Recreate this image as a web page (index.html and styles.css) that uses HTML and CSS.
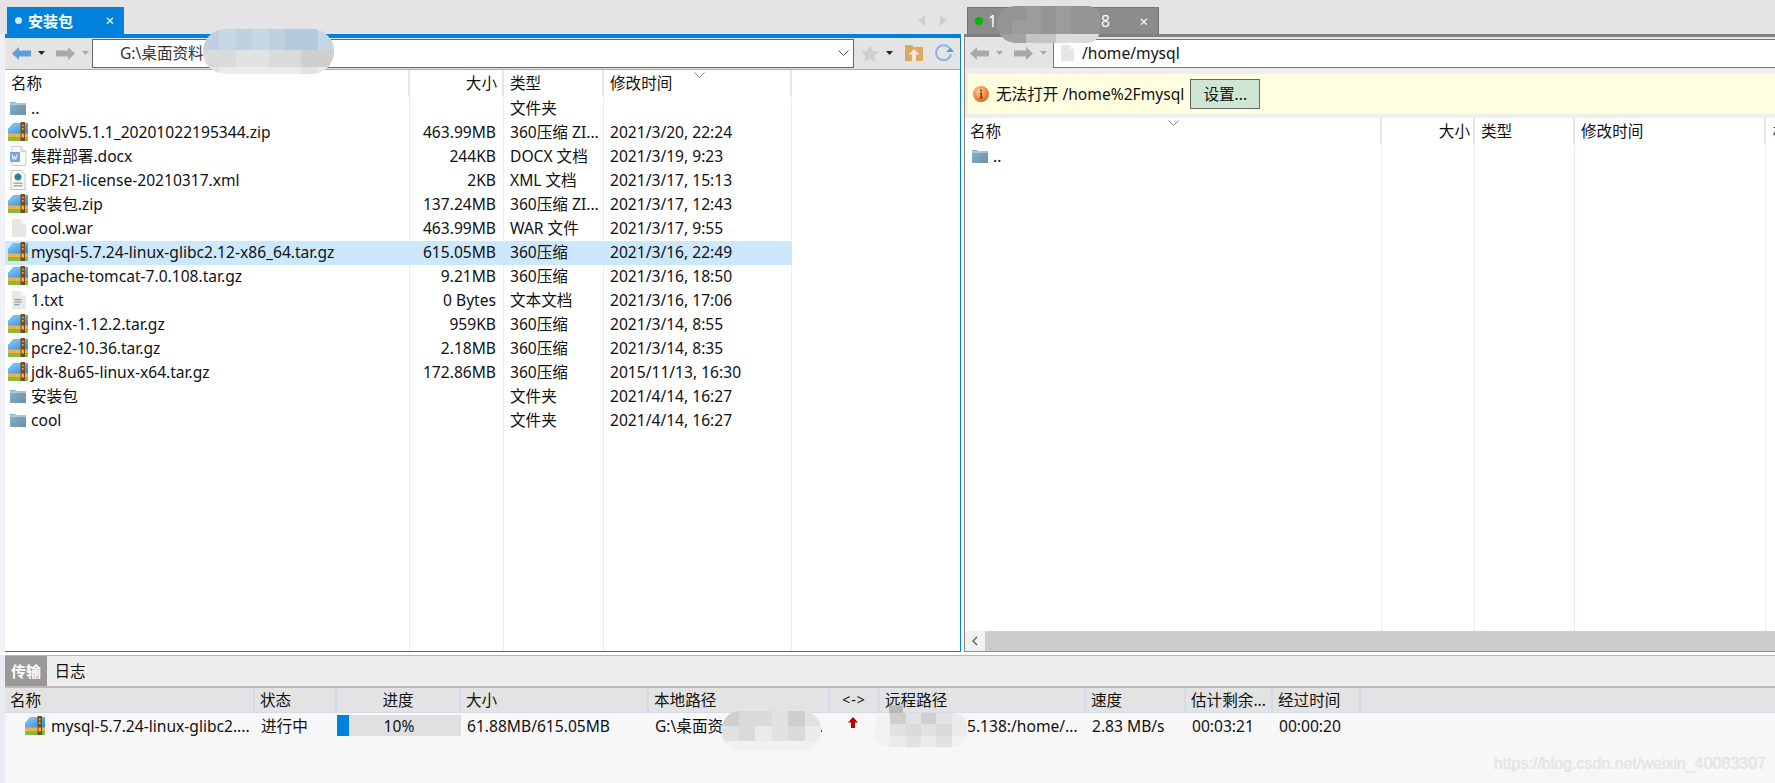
FILE: index.html
```html
<!DOCTYPE html>
<html lang="zh-CN">
<head>
<meta charset="utf-8">
<title>FileZilla</title>
<link rel="stylesheet" href="styles.css">
</head>
<body>
<svg class="defs" width="0" height="0" aria-hidden="true">
  <defs>
    <linearGradient id="fg" x1="0" y1="0" x2="1" y2="1"><stop offset="0" stop-color="#86b4c8"/><stop offset="1" stop-color="#6d8fa8"/></linearGradient>
    <linearGradient id="ab" x1="0" y1="0" x2="1" y2="1"><stop offset="0" stop-color="#8ad2f8"/><stop offset="1" stop-color="#2f86d8"/></linearGradient>
    <radialGradient id="ig" cx=".4" cy=".35" r=".7"><stop offset="0" stop-color="#fbd6a8"/><stop offset=".55" stop-color="#f0924a"/><stop offset="1" stop-color="#d8641c"/></radialGradient>
    <symbol id="i-folder" viewBox="0 0 18 16"><path d="M1 2h5l1 1h10v12H1z" fill="url(#fg)"/><path d="M1 3.500h16v1H1z" fill="#d6e4ec"/></symbol>
    <symbol id="i-archive" viewBox="0 0 20 20"><path d="M0 7 5 1h15v11H0z" fill="url(#ab)"/><path d="M0 11.500h20v3.500H0z" fill="#f4b044"/><path d="M0 15h20v3a1 1 0 0 1-1 1H1a1 1 0 0 1-1-1z" fill="#84bc3e"/><path d="M12.500 0h4.500v19h-4.500z" fill="#7a4a1e"/><path d="M14 2.500h1.500v2H14zm0 3.500h1.500v2H14zm-.5 5.500h2.500v4h-2.500z" fill="#e8b060"/></symbol>
    <symbol id="i-doc" viewBox="0 0 18 20"><path d="M3 .5h9l5 5v14H3z" fill="#fbfbfd" stroke="#c9cdd6"/><path d="M12 .5v5h5" fill="#e6e8ee" stroke="#c9cdd6"/><path d="M1 6h10v10H1z" fill="#7aa6e6"/><path d="m3 8.500 1.300 5 1.200-3.500 1.200 3.500 1.300-5" fill="none" stroke="#fff" stroke-width=".9"/></symbol>
    <symbol id="i-xml" viewBox="0 0 18 20"><path d="M2 .5h10l4 4v15H2z" fill="#f8f8f8" stroke="#c4c4c4"/><circle cx="9" cy="7" r="3.500" fill="#3a9a58"/><path d="M6 6.500h6M9 3.500v6" stroke="#2a62c8" stroke-width="1.300"/><path d="M4.500 12.500h9v1.500h-9zm0 2.500h9v1.500h-9z" fill="#a8a8a8"/></symbol>
    <symbol id="i-blank" viewBox="0 0 14 18"><path d="M0 0h9l5 5v13H0z" fill="#e6e6e6"/><path d="M9 0v5h5z" fill="#f4f4f4"/></symbol>
    <symbol id="i-txt" viewBox="0 0 14 18"><path d="M0 0h9l5 5v13H0z" fill="#e8e8e8"/><path d="M9 0v5h5z" fill="#f6f6f6"/><path d="M2.500 8h7v1.200h-7zm0 2.500h7v1.200h-7zm0 2.500h5v1.200h-5z" fill="#9c9c9c"/></symbol>
    <symbol id="i-back" viewBox="0 0 19 13"><path d="M0 6.500 7 0v3.500h12v6H7V13z"/></symbol>
    <symbol id="i-fwd" viewBox="0 0 19 13"><path d="M19 6.500 12 0v3.500H0v6h12V13z"/></symbol>
    <symbol id="i-caret" viewBox="0 0 7 4"><path d="M0 0h7L3.500 4z"/></symbol>
  </defs>
</svg>

<div class="app">
  <div class="main">
    <section class="pane pane-left">
      <div class="tabbar">
        <div class="tab tab-active"><span class="dot dot-light"></span><span class="tab-title">安装包</span><span class="tab-close">×</span></div>
        <div class="tab-nav">
          <svg class="tab-arrow" viewBox="0 0 7 11"><path d="M7 0v11L0 5.500z"/></svg>
          <svg class="tab-arrow" viewBox="0 0 7 11"><path d="M0 0v11l7-5.500z"/></svg>
        </div>
      </div>
      <div class="pane-body body-left">
        <div class="toolbar">
          <svg class="nav nav-blue"><use href="#i-back"/></svg>
          <svg class="caret caret-dark"><use href="#i-caret"/></svg>
          <svg class="nav nav-gray nav-second"><use href="#i-fwd"/></svg>
          <svg class="caret caret-gray"><use href="#i-caret"/></svg>
          <div class="address address-left">
            <span class="addr-text">G:\桌面资料</span>
            <svg class="chevron" viewBox="0 0 11 6"><path d="m.5.500 5 5 5-5" fill="none" stroke="#555"/></svg>
          </div>
          <svg class="tool-star" viewBox="0 0 18 17"><path d="m9 0 2.700 6 6.300.7-4.700 4.300 1.300 6L9 14l-5.600 3 1.300-6L0 6.700 6.300 6z" fill="#cfcfcf"/></svg>
          <svg class="caret caret-black"><use href="#i-caret"/></svg>
          <svg class="tool-home" viewBox="0 0 18 16"><path d="M0 0h7l2 2h9v14H0z" fill="#dfa766"/><path d="M9 4 3.500 9.500H7V16h4V9.500h3.500z" fill="#f7ead8"/></svg>
          <svg class="tool-refresh" viewBox="0 0 20 18"><path d="M15.500 4A7.500 7.500 0 1 0 17 10" fill="none" stroke="#86b8e4" stroke-width="2"/><path d="m12 8 4.500-4.500L20 8z" fill="#5a9fdc"/></svg>
        </div>
        <div class="cols cols-left head">
          <div class="hcell">名称</div>
          <div class="hcell right">大小</div>
          <div class="hcell">类型</div>
          <div class="hcell hcell-sorted">修改时间<svg class="sort sort-left" viewBox="0 0 11 6"><path d="m.5.500 5 5 5-5" fill="none" stroke="#888"/></svg></div>
        </div>
        <div class="list list-left">
          <div class="cols cols-left row"><div class="cell name"><svg class="ic ic-folder"><use href="#i-folder"/></svg>..</div><div class="cell right"></div><div class="cell">文件夹</div><div class="cell"></div></div>
          <div class="cols cols-left row"><div class="cell name"><svg class="ic ic-archive"><use href="#i-archive"/></svg>coolvV5.1.1_20201022195344.zip</div><div class="cell right">463.99MB</div><div class="cell">360压缩 ZI...</div><div class="cell">2021/3/20, 22:24</div></div>
          <div class="cols cols-left row"><div class="cell name"><svg class="ic ic-doc"><use href="#i-doc"/></svg>集群部署.docx</div><div class="cell right">244KB</div><div class="cell">DOCX 文档</div><div class="cell">2021/3/19, 9:23</div></div>
          <div class="cols cols-left row"><div class="cell name"><svg class="ic ic-doc"><use href="#i-xml"/></svg>EDF21-license-20210317.xml</div><div class="cell right">2KB</div><div class="cell">XML 文档</div><div class="cell">2021/3/17, 15:13</div></div>
          <div class="cols cols-left row"><div class="cell name"><svg class="ic ic-archive"><use href="#i-archive"/></svg>安装包.zip</div><div class="cell right">137.24MB</div><div class="cell">360压缩 ZI...</div><div class="cell">2021/3/17, 12:43</div></div>
          <div class="cols cols-left row"><div class="cell name"><svg class="ic ic-file"><use href="#i-blank"/></svg>cool.war</div><div class="cell right">463.99MB</div><div class="cell">WAR 文件</div><div class="cell">2021/3/17, 9:55</div></div>
          <div class="cols cols-left row selected"><div class="cell name"><svg class="ic ic-archive"><use href="#i-archive"/></svg>mysql-5.7.24-linux-glibc2.12-x86_64.tar.gz</div><div class="cell right">615.05MB</div><div class="cell">360压缩</div><div class="cell">2021/3/16, 22:49</div></div>
          <div class="cols cols-left row"><div class="cell name"><svg class="ic ic-archive"><use href="#i-archive"/></svg>apache-tomcat-7.0.108.tar.gz</div><div class="cell right">9.21MB</div><div class="cell">360压缩</div><div class="cell">2021/3/16, 18:50</div></div>
          <div class="cols cols-left row"><div class="cell name"><svg class="ic ic-file"><use href="#i-txt"/></svg>1.txt</div><div class="cell right">0 Bytes</div><div class="cell">文本文档</div><div class="cell">2021/3/16, 17:06</div></div>
          <div class="cols cols-left row"><div class="cell name"><svg class="ic ic-archive"><use href="#i-archive"/></svg>nginx-1.12.2.tar.gz</div><div class="cell right">959KB</div><div class="cell">360压缩</div><div class="cell">2021/3/14, 8:55</div></div>
          <div class="cols cols-left row"><div class="cell name"><svg class="ic ic-archive"><use href="#i-archive"/></svg>pcre2-10.36.tar.gz</div><div class="cell right">2.18MB</div><div class="cell">360压缩</div><div class="cell">2021/3/14, 8:35</div></div>
          <div class="cols cols-left row"><div class="cell name"><svg class="ic ic-archive"><use href="#i-archive"/></svg>jdk-8u65-linux-x64.tar.gz</div><div class="cell right">172.86MB</div><div class="cell">360压缩</div><div class="cell">2015/11/13, 16:30</div></div>
          <div class="cols cols-left row"><div class="cell name"><svg class="ic ic-folder"><use href="#i-folder"/></svg>安装包</div><div class="cell right"></div><div class="cell">文件夹</div><div class="cell">2021/4/14, 16:27</div></div>
          <div class="cols cols-left row"><div class="cell name"><svg class="ic ic-folder"><use href="#i-folder"/></svg>cool</div><div class="cell right"></div><div class="cell">文件夹</div><div class="cell">2021/4/14, 16:27</div></div>
        </div>
      </div>
    </section>

    <section class="pane pane-right">
      <div class="tabbar tabbar-right">
        <div class="tab tab-idle"><span class="dot dot-green"></span><span class="tab-title tab-host"><span>1</span><span>8</span></span><span class="tab-close">×</span></div>
      </div>
      <div class="pane-body body-right">
        <div class="toolbar toolbar-right">
          <svg class="nav nav-gray nav-r1"><use href="#i-back"/></svg>
          <svg class="caret caret-gray"><use href="#i-caret"/></svg>
          <svg class="nav nav-gray nav-second"><use href="#i-fwd"/></svg>
          <svg class="caret caret-gray"><use href="#i-caret"/></svg>
          <div class="address address-right">
            <svg class="addr-doc"><use href="#i-blank"/></svg>
            <span class="addr-path">/home/mysql</span>
          </div>
        </div>
        <div class="notice-wrap">
          <div class="notice">
            <svg class="info" viewBox="0 0 16 16"><circle cx="8" cy="8" r="8" fill="url(#ig)"/><circle cx="8" cy="4.500" r="1.100" fill="#7a3208"/><path d="M6.500 6.500h2.500v5h1v1H6.500v-1h1v-4h-1z" fill="#7a3208"/></svg>
            <span class="notice-text">无法打开 /home%2Fmysql</span>
            <button class="notice-btn">设置...</button>
          </div>
        </div>
        <div class="cols cols-right head">
          <div class="hcell hcell-sorted">名称<svg class="sort sort-right" viewBox="0 0 11 6"><path d="m.5.500 5 5 5-5" fill="none" stroke="#888"/></svg></div>
          <div class="hcell right">大小</div>
          <div class="hcell">类型</div>
          <div class="hcell">修改时间</div>
          <div class="hcell hcell-last">权限</div>
        </div>
        <div class="list list-right">
          <div class="cols cols-right row"><div class="cell name name-r"><svg class="ic ic-folder"><use href="#i-folder"/></svg>..</div></div>
        </div>
        <div class="hscroll">
          <div class="hscroll-btn"><svg viewBox="0 0 6 10" class="hscroll-arrow"><path d="M5 1 1 5l4 4" fill="none" stroke="#555" stroke-width="1.200"/></svg></div>
          <div class="hscroll-thumb"></div>
        </div>
      </div>
    </section>
  </div>

  <section class="queue">
    <div class="queue-tabs">
      <div class="qtab qtab-active">传输</div>
      <div class="qtab">日志</div>
    </div>
    <div class="qcols qhead">
      <div class="qh">名称</div>
      <div class="qh">状态</div>
      <div class="qh center">进度</div>
      <div class="qh">大小</div>
      <div class="qh">本地路径</div>
      <div class="qh center qh-arrow">&lt;-&gt;</div>
      <div class="qh">远程路径</div>
      <div class="qh">速度</div>
      <div class="qh">估计剩余...</div>
      <div class="qh">经过时间</div>
    </div>
    <div class="qcols qrow">
      <div class="qc qname"><svg class="qic"><use href="#i-archive"/></svg>mysql-5.7.24-linux-glibc2....</div>
      <div class="qc">进行中</div>
      <div class="qc qprogress"><div class="bar"><div class="bar-fill" style="width:10%"></div><span class="bar-label">10%</span></div></div>
      <div class="qc">61.88MB/615.05MB</div>
      <div class="qc qlocal"><span>G:\桌面资</span><span>.</span></div>
      <div class="qc center"><svg class="up" viewBox="0 0 10 11"><path d="M5 0 10 5.500H7V11H3V5.500H0z"/></svg></div>
      <div class="qc qremote">5.138:/home/...</div>
      <div class="qc">2.83 MB/s</div>
      <div class="qc">00:03:21</div>
      <div class="qc">00:00:20</div>
    </div>
    <div class="watermark">https://blog.csdn.net/weixin_40083307</div>
  </section>

  <div class="blob blob-addr">
    <i class="m1"></i><i class="m2"></i><i class="m1"></i><i class="m2"></i><i class="m1"></i><i class="m3"></i><i class="m3"></i><i class="m2"></i>
    <i class="m4"></i><i class="m4"></i><i class="m5"></i><i class="m5"></i><i class="m4"></i><i class="m4"></i><i class="m6"></i><i class="m6"></i>
    <i class="m5"></i><i class="m7"></i><i class="m7"></i><i class="m7"></i><i class="m7"></i><i class="m7"></i><i class="m5"></i><i class="m7"></i>
  </div>
  <div class="blob blob-tab">
    <i class="g1"></i><i class="g1"></i><i class="g2"></i><i class="g1"></i><i class="g2"></i><i class="g1"></i><i class="g1"></i>
    <i class="g1"></i><i class="g2"></i><i class="g2"></i><i class="g1"></i><i class="g2"></i><i class="g1"></i><i class="g1"></i>
    <i class="g3"></i><i class="g3"></i><i class="g4"></i><i class="g4"></i><i class="g5"></i><i class="g5"></i><i class="g5"></i>
  </div>
  <div class="blob blob-local">
    <i class="m6"></i><i class="m4"></i><i class="m4"></i><i class="m5"></i><i class="m6"></i><i class="m5"></i>
    <i class="m5"></i><i class="m4"></i><i class="m7"></i><i class="m5"></i><i class="m4"></i><i class="m7"></i>
    <i class="m8"></i><i class="m8"></i><i class="m8"></i><i class="m8"></i><i class="m8"></i><i class="m8"></i>
  </div>
  <div class="blob-notch"></div>
  <div class="blob blob-remote">
    <i class="m8"></i><i class="m6"></i><i class="m5"></i><i class="m6"></i><i class="m5"></i><i class="m7"></i>
    <i class="m8"></i><i class="m5"></i><i class="m4"></i><i class="m5"></i><i class="m4"></i><i class="m7"></i>
    <i class="m8"></i><i class="m7"></i><i class="m5"></i><i class="m7"></i><i class="m5"></i><i class="m8"></i>
  </div>
</div>
</body>
</html>
```
FILE: styles.css
```css
* { box-sizing: border-box; }
html, body { margin: 0; padding: 0; }
body {
  width: 1775px;
  height: 783px;
  overflow: hidden;
  font-family: "Noto Sans", "Noto Sans CJK SC", sans-serif;
  font-size: 15.6px;
  color: #111;
  background: #e9ebf1;
}
.defs { position: absolute; }
.app { position: relative; width: 1775px; height: 783px; overflow: hidden; }

/* top split */
.main {
  display: flex;
  gap: 3px;
  height: 655px;
  background: linear-gradient(#e4e4e4 34px, #fff 34px);
}
.pane { height: 652px; display: flex; flex-direction: column; }
.pane-left { width: 961px; background: #eff1f6; }
.pane-right { flex: 1; min-width: 0; }

.tabbar { height: 34px; flex: none; background: #e4e4e4; display: flex; align-items: flex-end; padding-left: 7px; }
.tabbar-right { padding-left: 3px; }
.tab { height: 27px; display: flex; align-items: center; color: #fff; }
.tab-active { width: 117px; background: #0082dc; padding-left: 8px; }
.tab-idle { width: 192px; background: #8c8c8c; border: 1px solid #777; border-bottom: 0; padding-left: 7px; }
.dot { width: 8px; height: 8px; border-radius: 50%; flex: none; }
.dot-light { background: #cfe4f5; width: 7px; height: 7px; }
.dot-green { background: #00b800; }
.tab-title { margin-left: 6px; font-weight: 700; font-size: 15px; padding-bottom: 1px; }
.tab-host { display: flex; justify-content: space-between; width: 122px; margin-left: 5px; font-weight: 400; font-size: 15.6px; }
.tab-close { margin-left: auto; margin-right: 10px; font-size: 15px; line-height: 1; }
.tab-nav { margin-left: auto; margin-right: 14px; display: flex; gap: 15px; align-self: center; margin-top: 7px; }
.tab-arrow { width: 7px; height: 11px; fill: #cfcfcf; }

.pane-body { flex: 1; min-height: 0; display: flex; flex-direction: column; background: #fff; }
.body-left { margin-left: 5px; border-top: 4px solid #0082dc; border-right: 1px solid #0082dc; border-bottom: 1px solid #0a82d8; }
.body-right { border-top: 3px solid #808080; border-left: 1px solid #808080; border-bottom: 1px solid #909090; }

.toolbar { height: 32px; flex: none; background: #e4e4e4; border-bottom: 1px solid #aaa; display: flex; align-items: center; padding: 0 0 1px 7px; }
.toolbar-right { height: 31px; padding: 1px 0 0 5px; background: #e4e4e4; border-bottom: 0; }
.nav { width: 19px; height: 13px; flex: none; }
.nav-blue { fill: #5f9fd8; }
.nav-gray { fill: #a9a9a9; }
.nav-second { margin-left: 11px; }
.caret { width: 7px; height: 4px; flex: none; margin-left: 7px; }
.caret-dark, .caret-black { fill: #222; }
.caret-gray { fill: #a9a9a9; }

.address { height: 29px; background: #fff; border: 1px solid #666; display: flex; align-items: center; padding-bottom: 1px; }
.address-left { width: 762px; margin-left: 3px; padding-left: 27px; }
.address-right { flex: 1; margin-left: 6px; padding-left: 7px; border-right: 0; border-color: #777; }
.addr-text { color: #333; }
.chevron { width: 11px; height: 6px; margin-left: auto; margin-right: 4px; }
.addr-doc { width: 13px; height: 18px; flex: none; }
.addr-path { margin-left: 8px; }
.tool-star { width: 18px; height: 17px; margin-left: 7px; flex: none; }
.tool-home { width: 18px; height: 16px; margin-left: 12px; flex: none; }
.tool-refresh { width: 20px; height: 18px; margin-left: 11px; flex: none; }
.caret-black { margin-left: 7px; }

.cols { display: grid; }
.cols-left { grid-template-columns: 405px 94px 100px 188px; width: 787px; }
.cols-right { grid-template-columns: 417px 93px 100px 191px 1fr; }

.head { height: 27px; flex: none; }
.hcell { position: relative; border-right: 2px solid #e6e6e6; padding: 0 5px 2px 6px; display: flex; align-items: center; height: 26px; }
.hcell.right { justify-content: flex-end; }
.cols-right .hcell.right { padding-right: 3px; }
.hcell-last { border-right: 0; padding-left: 7px; white-space: nowrap; overflow: hidden; }
.cols-right .hcell:first-child { padding-left: 5px; }
.sort { position: absolute; top: 2px; width: 11px; height: 6px; }
.sort-left { left: 90px; }
.sort-right { left: 203px; }

.list { flex: 1; min-height: 0; overflow: hidden; background-repeat: no-repeat; }
.list-left {
  background-image: linear-gradient(#e6eff8, #e6eff8), linear-gradient(#e6eff8, #e6eff8), linear-gradient(#e6eff8, #e6eff8), linear-gradient(#e6eff8, #e6eff8);
  background-size: 1px 100%;
  background-position: 404px 0, 498px 0, 598px 0, 786px 0;
}
.list-right {
  background-image: linear-gradient(#e6eff8, #e6eff8), linear-gradient(#e6eff8, #e6eff8), linear-gradient(#e6eff8, #e6eff8), linear-gradient(#e6eff8, #e6eff8);
  background-size: 1px 100%;
  background-position: 416px 0, 509px 0, 609px 0, 800px 0;
}
.row { height: 24px; padding-bottom: 2px; align-items: center; }
.row.selected { background: #cce8ff; }
.cell { padding: 0 6px; white-space: nowrap; overflow: hidden; line-height: 22px; height: 22px; }
.cell.right { text-align: right; padding-right: 8px; }
.name { display: flex; align-items: center; padding-left: 3px; overflow: visible; }
.name-r { padding-left: 5px; }
.ic { flex: none; margin-right: 3px; }
.ic-folder { width: 18px; height: 16px; margin-left: 1px; margin-right: 4px; }
.ic-archive { width: 20px; height: 20px; margin-right: 3px; }
.ic-doc { width: 18px; height: 20px; margin-left: 1px; margin-right: 4px; }
.ic-file { width: 14px; height: 18px; margin-left: 4px; margin-right: 5px; }

/* notice */
.notice-wrap { height: 50px; flex: none; background: #eee; padding: 6px 0 4px 3px; }
.notice { height: 40px; background: #ffffe0; display: flex; align-items: center; padding-left: 5px; }
.info { width: 16px; height: 16px; flex: none; }
.notice-text { margin-left: 7px; padding-bottom: 1px; }
.notice-btn { margin-left: 6px; width: 70px; height: 30px; background: #d0e6d4; border: 1px solid #666; padding: 0 0 2px; font: inherit; color: #111; }

.hscroll { height: 20px; flex: none; display: flex; background: #f0f0f0; }
.hscroll-btn { width: 20px; display: flex; align-items: center; justify-content: center; }
.hscroll-arrow { width: 6px; height: 10px; }
.hscroll-thumb { flex: 1; background: #ccc; }

/* queue */
.queue { position: relative; height: 128px; margin-left: 5px; background: #f7f7f7; border-top: 1px solid #b5b5b5; }
.queue-tabs { height: 30px; background: #eee; display: flex; }
.qtab { width: 42px; display: flex; align-items: center; justify-content: center; margin-right: 2px; padding-bottom: 2px; }
.qtab-active { background: #999; color: #fff; font-weight: 700; font-size: 15px; }
.qcols { display: grid; grid-template-columns: 250px 82px 124px 188px 181px 50px 206px 100px 87px 88px; }
.qhead { height: 27px; background: #e3e3e3; border-top: 2px solid #bbb; border-bottom: 1px solid #d3dbea; }
.qh { border-right: 2px solid #d3dbea; padding: 0 0 2px 5px; display: flex; align-items: center; white-space: nowrap; overflow: hidden; }
.center { justify-content: center; padding-left: 0; }
.qh-arrow { font-size: 14px; letter-spacing: 1px; }
.qrow { height: 26px; }
.qc { display: flex; align-items: center; padding: 0 0 1px 6px; white-space: nowrap; overflow: hidden; }
.qname { padding-left: 20px; }
.qic { width: 20px; height: 20px; margin-right: 6px; flex: none; }
.qprogress { padding: 2px 0 3px; }
.bar { position: relative; width: 100%; height: 21px; background: #e0e0e0; display: flex; }
.bar-fill { background: #0082dc; height: 100%; }
.bar-label { position: absolute; inset: 0; display: flex; align-items: center; justify-content: center; }
.qlocal { justify-content: space-between; padding-right: 7px; }
.up { width: 10px; height: 11px; fill: #c00000; margin-right: 10px; margin-bottom: 6px; }
.qremote { padding-left: 87px; }
.watermark { position: absolute; right: 9px; bottom: 10px; font-family: "Liberation Sans", sans-serif; font-size: 16px; color: #e6e6e6; text-shadow: 0 0 1px #dcdcdc; }

/* redaction mosaics lying over text */
.blob { position: absolute; display: grid; overflow: hidden; }
.blob i { display: block; }
.blob-addr { left: 203px; top: 29px; width: 131px; height: 45px; border-radius: 22px; grid-template-columns: repeat(8, 1fr); grid-template-rows: 21px 17px 7px; }
.blob-tab { left: 997px; top: 6px; width: 103px; height: 37px; border-radius: 28px 18px 20px 28px; grid-template-columns: repeat(7, 1fr); grid-template-rows: 14px 14px 9px; }
.blob-local { left: 722px; top: 711px; width: 99px; height: 39px; border-radius: 18px; grid-template-columns: repeat(6, 1fr); grid-template-rows: 15px 15px 9px; }
.blob-remote { left: 875px; top: 713px; width: 92px; height: 34px; border-radius: 14px; grid-template-columns: repeat(6, 1fr); grid-template-rows: 11px 12px 11px; }
.blob-notch { position: absolute; left: 889px; top: 705px; width: 14px; height: 8px; background: #b8b8b8; border-radius: 3px 3px 0 0; }
.m1 { background: #bfd1e0; }
.m2 { background: #c6d6e4; }
.m3 { background: #b5c9dc; }
.m4 { background: #dadada; }
.m5 { background: #e2e2e2; }
.m6 { background: #cfcfcf; }
.m7 { background: #ebebeb; }
.m8 { background: #f1f1f1; }
.g1 { background: #959595; }
.g2 { background: #9c9c9c; }
.g3 { background: #a2a2a2; }
.g4 { background: #c4c4c4; }
.g5 { background: #dcdcdc; }
```
